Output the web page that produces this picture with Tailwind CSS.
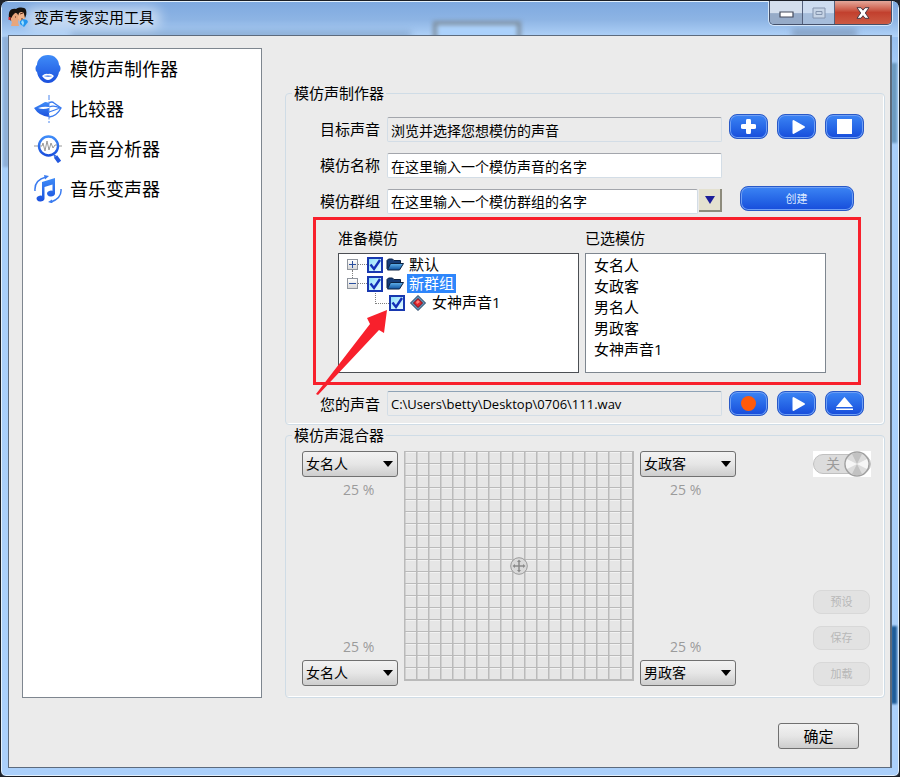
<!DOCTYPE html>
<html lang="zh-CN">
<head>
  <meta charset="UTF-8" />
  <meta name="viewport" content="width=device-width, initial-scale=1.0"/>
  <title>变声专家实用工具</title>
  <script src="https://cdn.jsdelivr.net/npm/@tailwindcss/browser@4"></script>
</head>
<body class="bg-[#20242c] font-['Open_Sans','Noto_Sans_CJK_SC',sans-serif] text-[15px] leading-5 text-black">

  <!-- Shared gradients and symbols -->
  <svg class="absolute size-0" aria-hidden="true">
    <defs>
      <linearGradient id="blue" x1="0" y1="0" x2="0" y2="1">
        <stop offset="0" stop-color="#3f8cf8"/>
        <stop offset="1" stop-color="#1b50dd"/>
      </linearGradient>
      <linearGradient id="folder" x1="0" y1="0" x2="0" y2="1">
        <stop offset="0" stop-color="#63b4ee"/>
        <stop offset="1" stop-color="#0d4f9c"/>
      </linearGradient>
      <symbol id="i-folder" viewBox="0 0 18 13">
        <path d="M1 11V2.5L2.5 1h4L8 2.500h6.500V5" fill="#173d78" stroke="#0c2344"/>
        <path d="M1.500 12 4.500 5.500h13L13.500 12z" fill="url(#folder)" stroke="#0c2344"/>
      </symbol>
      <symbol id="i-check" viewBox="0 0 16 16">
        <path d="M3.500 7.500 7 12l6-9" fill="none" stroke="#1430b8" stroke-width="2.400"/>
      </symbol>
      <symbol id="i-play" viewBox="0 0 15 16">
        <path d="M2.500 2v12L13 8z" fill="#fff" stroke="#fff" stroke-width="2" stroke-linejoin="round"/>
      </symbol>
      <symbol id="i-down" viewBox="0 0 10 6">
        <path d="M0 0h10L5 6z"/>
      </symbol>
    </defs>
  </svg>

  <!-- Window -->
  <div class="relative flex min-h-screen flex-col overflow-hidden rounded-t-lg rounded-b-md border border-[#1a1e26] bg-linear-to-b from-[#8ab2e4] via-[#a8cffa] via-10% to-[#abd0fb] px-[7px] pb-2 shadow-[inset_0_0_0_1px_#e4f1fc]">

    <!-- Shapes seen through the glass frame -->
    <div class="pointer-events-none absolute inset-x-px top-px h-[35px] bg-linear-to-b from-[#7ea9e0] via-[#8db4e4] to-[#b0d2f8]" aria-hidden="true"></div>
    <div class="pointer-events-none absolute top-5 left-[432px] h-6 w-[88px] border-4 border-[#7e8fa0] bg-[#abd1fb] blur-[2px]" aria-hidden="true"></div>
    <div class="pointer-events-none absolute top-[30px] left-[70px] h-2 w-[340px] bg-[#6987b0]/45 blur-[3px]" aria-hidden="true"></div>
    <div class="pointer-events-none absolute top-7 right-[42px] h-2 w-[65px] bg-[#6c83a4]/60 blur-[3px]" aria-hidden="true"></div>
    <div class="pointer-events-none absolute top-1.5 left-6 h-[22px] w-[136px] rounded-full bg-white/50 blur-[6px]" aria-hidden="true"></div>
    <div class="pointer-events-none absolute top-[62px] right-0.5 h-20 w-1.5 bg-[#6b9ac0] blur-[1px]" aria-hidden="true"></div>
    <div class="pointer-events-none absolute right-0.5 bottom-[72px] h-[78px] w-1.5 bg-[#1f5d99] blur-[1px]" aria-hidden="true"></div>
    <div class="pointer-events-none absolute top-9 left-0.5 h-[130px] w-1.5 bg-[#8fb0d8] blur-[1px]" aria-hidden="true"></div>

    <!-- Title bar -->
    <header class="relative flex h-[34px] shrink-0 items-start justify-between">
      <div class="flex items-center gap-1.5 pt-1.5">
        <svg class="size-5" viewBox="0 0 20 20" aria-hidden="true">
          <path d="M1 11C0 4 3 1 8 2c3-2 9-2 10 1 1 3 0 6-1 8L3 14z" fill="#17130f"/>
          <path d="M4 8c1-3 5-3 6 0l1 3-1 4 1 4H3l1-4C2 13 3 10 4 8z" fill="#e8a67c"/>
          <path d="M11 6c2-2 5-1 5 1l1 4-2 3-3 1-2-3 0-3z" fill="#f1b58c"/>
          <path d="M2 6 8 5l-3 3-3 5z" fill="#17130f"/>
          <path d="M12 7l3-1M7 10l1 0M13 12h2" stroke="#5a2a18"/>
          <path d="M1.500 10v3" stroke="#d32d2d" stroke-width="2"/>
          <path d="m12 14 3-2 4 1 1 2-4 5-4-3z" fill="#2295ee"/>
          <path d="m13 15 2-2 1 3-1 3z" fill="#9ce0ff"/>
        </svg>
        <h1>变声专家实用工具</h1>
      </div>
      <div class="flex h-6 overflow-hidden rounded-b-[5px] border border-t-0 border-[#44506a] shadow-[0_0_0_1px_#d5e6f8]">
        <button type="button" aria-label="最小化" class="grid w-[33px] place-items-center border-r border-[#53607c] bg-linear-to-b from-[#d3deed] from-50% to-[#96abc8] to-55%">
          <svg class="mt-1 h-[7px] w-[15px]" viewBox="0 0 15 7"><path d="M1 1h13v5H1z" fill="#fff" stroke="#444a5c" stroke-width="1.200"/></svg>
        </button>
        <button type="button" aria-label="最大化" disabled class="grid w-8 place-items-center border-r border-[#53607c] bg-linear-to-b from-[#cddcf0] from-50% to-[#a6bddb] to-55%">
          <svg class="h-3 w-[14px]" viewBox="0 0 14 12"><path d="M1 1h12v10H1z" fill="#c6d4e6" stroke="#8494ae"/><path d="M4 4.500h6v3H4z" fill="none" stroke="#8494ae"/></svg>
        </button>
        <button type="button" aria-label="关闭" class="grid w-[56px] place-items-center bg-linear-to-b from-[#e3a79a] via-[#c2402e] via-50% to-[#cc5a43]">
          <svg class="h-3 w-[14px]" viewBox="0 0 14 12"><path d="M1 .700h4l2 2.500L9 .700h4L9.300 6l3.700 5.300H9L7 8.700l-2 2.600H1L4.700 6z" fill="#fff" stroke="#4b3a44"/></svg>
        </button>
      </div>
    </header>

    <!-- Client area -->
    <main class="relative flex flex-1 flex-col border border-r-2 border-[#5d6b7d] bg-[#ebebeb] pt-3 pr-[5px] pl-[13px]">
      <div class="flex flex-1 gap-[23px]">

        <!-- Tool list -->
        <nav class="w-60 shrink-0 border border-[#7e868f] bg-white text-lg">
          <a href="#" class="flex h-10 items-center gap-2 pl-[11px]">
            <svg class="size-7" viewBox="0 0 28 28">
              <path d="M14 0c7 0 11 5 11 10 2 1 2 6 0 7-1 6-5 11-11 11S4 23 3 17c-2-1-2-6 0-7C3 5 7 0 14 0z" fill="url(#blue)"/>
              <path d="M8 21q3-3 6-2 3-1 6 2-3 4-6 4t-6-4z" fill="#fff"/>
              <path d="M9.500 21q4-1 9 0-4 1.500-9 0z" fill="#2b68e6"/>
            </svg>
            模仿声制作器
          </a>
          <a href="#" class="flex h-10 items-center gap-2 pl-[11px]">
            <svg class="size-7" viewBox="0 0 28 28">
              <path d="M0 13Q6 10 11 7q2 0 4 1v14Q5 21 0 13z" fill="url(#blue)"/>
              <path d="M4 13q6-2 11-1v1Q9 15 4 13z" fill="#fff"/>
              <path d="M15 8q3-2 5 0l7 5q-4 8-12 9" fill="none" stroke="#3b7cf0" stroke-width="1.300"/>
              <path d="M15 12q5-2 11 1-5 2-11 4" fill="none" stroke="#3b7cf0" stroke-width="1.300"/>
              <path d="M15 0v28" stroke="#4b86f0" stroke-dasharray="5 1.500"/>
            </svg>
            比较器
          </a>
          <a href="#" class="flex h-10 items-center gap-2 pl-[11px]">
            <svg class="size-7" viewBox="0 0 28 28">
              <path d="M0 11h5M24 11h4" stroke="#999"/>
              <circle cx="14.500" cy="11" r="9.500" fill="#fff" stroke="url(#blue)" stroke-width="2.400"/>
              <path d="M6 11h2l1-3 2 8 2-10 2 9 2-7 2 5 2-3h2" fill="none" stroke="#999"/>
              <path d="m20 20 1.500 1.500" stroke="#2b68e6" stroke-width="2"/>
              <path d="m21.500 21.500 4 5.500" stroke="#2358df" stroke-width="4"/>
            </svg>
            声音分析器
          </a>
          <a href="#" class="flex h-10 items-center gap-2 pl-[11px]">
            <svg class="size-7" viewBox="0 0 28 28">
              <path d="M8 7 21 3v15.500a4 3 0 1 1-2.500-2.700V9.500L10.500 12v11.500a4 3 0 1 1-2.500-2.700z" fill="url(#blue)"/>
              <path d="M1 16Q0 5 12 2M27 14q1 9-10 13" fill="none" stroke="#3b7cf0" stroke-width="1.500"/>
              <path d="m10 0 5 1-4 3.500zM18 24.500 14 27l4.500 1.500z" fill="#3b7cf0"/>
            </svg>
            音乐变声器
          </a>
        </nav>

        <!-- Right column -->
        <div class="flex min-w-0 flex-1 flex-col pt-[35px]">

          <!-- Voice maker -->
          <fieldset class="relative min-w-0 rounded border border-[#cfdce6] pb-2 shadow-[inset_-1px_-1px_0_#fff]">
            <legend class="ml-1.5 px-0.5">模仿声制作器</legend>

            <div class="grid grid-cols-[94px_minmax(0,1fr)_135px] gap-x-[7px] gap-y-2 pt-[11px] pr-5">
              <label for="target" class="self-end pb-[3px] text-right">目标声音</label>
              <input id="target" type="text" readonly value="浏览并选择您想模仿的声音" class="mt-[3px] h-[25px] w-full min-w-0 rounded-xs border border-[#d3dde6] border-t-[#a3a6ac] bg-[#ebebeb] px-[3px] text-sm" />
              <div class="flex h-[25px] gap-[9px]">
                <button type="button" aria-label="添加" class="grid w-[39px] place-items-center rounded-lg border border-[#2859c8] bg-linear-to-b from-[#3c84f4] to-[#184cdb] shadow-[inset_0_0_0_1px_#6f9ff4]">
                  <svg class="size-[15px]" viewBox="0 0 15 15"><path d="M7.500 2v11M2 7.500h11" stroke="#fff" stroke-width="5" stroke-linecap="round"/></svg>
                </button>
                <button type="button" aria-label="播放目标声音" class="grid w-[39px] place-items-center rounded-lg border border-[#2859c8] bg-linear-to-b from-[#3c84f4] to-[#184cdb] pl-1 shadow-[inset_0_0_0_1px_#6f9ff4]">
                  <svg class="h-4 w-[15px]"><use href="#i-play"/></svg>
                </button>
                <button type="button" aria-label="停止" class="grid w-[39px] place-items-center rounded-lg border border-[#2859c8] bg-linear-to-b from-[#3c84f4] to-[#184cdb] shadow-[inset_0_0_0_1px_#6f9ff4]">
                  <span class="size-[15px] bg-white"></span>
                </button>
              </div>

              <label for="name" class="self-end pb-[3px] text-right">模仿名称</label>
              <input id="name" type="text" value="在这里输入一个模仿声音的名字" class="mt-[3px] h-[25px] w-full min-w-0 rounded-xs border border-[#d3dde6] border-t-[#a3a6ac] bg-white px-[3px] text-sm" />
              <div></div>

              <label for="group" class="self-end pb-[3px] text-right">模仿群组</label>
              <div class="mt-[3px] flex h-[25px] gap-px">
                <input id="group" type="text" value="在这里输入一个模仿群组的名字" class="w-full min-w-0 rounded-xs border border-[#d3dde6] border-t-[#a3a6ac] bg-white px-[3px] text-sm" />
                <button type="button" aria-label="选择群组" class="mb-0.5 grid w-[23px] shrink-0 place-items-center border-r-2 border-b-2 border-[#8d8b7c] bg-[#e4e1d0]">
                  <svg class="h-2 w-[10px] fill-[#1d1f9a]" viewBox="0 0 10 8"><path d="M0 0h10L5 8z"/></svg>
                </button>
              </div>
              <div class="flex items-start justify-center">
                <button type="button" class="h-[25px] w-[114px] rounded-lg border border-[#2859c8] bg-linear-to-b from-[#3c84f4] to-[#184cdb] text-[11px] leading-4 text-[#dbe8ff] shadow-[inset_0_0_0_1px_#6f9ff4]">创建</button>
              </div>
            </div>

            <!-- Highlighted lists -->
            <div class="relative mt-[3px] mr-[23px] mb-1.5 ml-[27px] flex h-[168px] gap-1.5 border-[3px] border-[#f8202c] pt-2 pr-8 pb-2 pl-[22px]">
              <section class="flex min-w-0 flex-1 flex-col">
                <h2>准备模仿</h2>
                <ul class="mt-[5px] h-[120px] border border-[#4c4f54] bg-white pt-px pl-2 leading-[19px]">
                  <li class="flex h-[19px] items-center">
                    <button type="button" aria-label="展开默认" class="grid size-[11px] place-items-center border border-[#8f959e] bg-linear-to-b from-white to-[#d8d8d8]">
                      <svg class="size-[7px]" viewBox="0 0 7 7"><path d="M0 3.500h7M3.500 0v7" stroke="#2a4f9e"/></svg>
                    </button>
                    <span class="w-[9px] border-t border-dotted border-[#808080]"></span>
                    <span class="grid size-4">
                      <input type="checkbox" checked aria-label="默认" class="col-start-1 row-start-1 size-4 appearance-none border-2 border-[#1838b0] bg-linear-to-br from-[#8fe0fb] to-[#e6faff]" />
                      <svg class="pointer-events-none col-start-1 row-start-1 size-4"><use href="#i-check"/></svg>
                    </span>
                    <svg class="ml-[3px] h-[13px] w-[18px]"><use href="#i-folder"/></svg>
                    <span class="ml-[3px] px-0.5">默认</span>
                  </li>
                  <li class="relative flex h-[19px] items-center">
                    <span class="absolute -top-1 left-[5px] h-2 border-l border-dotted border-[#808080]"></span>
                    <button type="button" aria-label="折叠新群组" class="grid size-[11px] place-items-center border border-[#8f959e] bg-linear-to-b from-white to-[#d8d8d8]">
                      <svg class="size-[7px]" viewBox="0 0 7 7"><path d="M0 3.500h7" stroke="#2a4f9e"/></svg>
                    </button>
                    <span class="w-[9px] border-t border-dotted border-[#808080]"></span>
                    <span class="grid size-4">
                      <input type="checkbox" checked aria-label="新群组" class="col-start-1 row-start-1 size-4 appearance-none border-2 border-[#1838b0] bg-linear-to-br from-[#8fe0fb] to-[#e6faff]" />
                      <svg class="pointer-events-none col-start-1 row-start-1 size-4"><use href="#i-check"/></svg>
                    </span>
                    <svg class="ml-[3px] h-[13px] w-[18px]"><use href="#i-folder"/></svg>
                    <span class="ml-[3px] bg-[#2e86fb] px-0.5 text-white">新群组</span>
                  </li>
                  <li class="flex h-[19px] items-center pl-7">
                    <span class="h-[11px] w-[14px] self-start border-b border-l border-dotted border-[#808080]"></span>
                    <span class="grid size-4">
                      <input type="checkbox" checked aria-label="女神声音1" class="col-start-1 row-start-1 size-4 appearance-none border-2 border-[#1838b0] bg-linear-to-br from-[#8fe0fb] to-[#e6faff]" />
                      <svg class="pointer-events-none col-start-1 row-start-1 size-4"><use href="#i-check"/></svg>
                    </span>
                    <svg class="ml-[5px] size-4" viewBox="0 0 16 16">
                      <path d="m8 .500 7.500 7.500L8 15.500.500 8z" fill="#5f93b8" stroke="#1c3a5c"/>
                      <path d="m8 3.500 4.500 4.500L8 12.500 3.500 8z" fill="#e0242c" stroke="#7c1018"/>
                      <path d="m8 5 2 2-3 2-1-2z" fill="#ff7d76"/>
                    </svg>
                    <span class="ml-1 px-0.5">女神声音1</span>
                  </li>
                </ul>
              </section>
              <section class="flex min-w-0 flex-1 flex-col">
                <h2>已选模仿</h2>
                <ul class="mt-[5px] h-[120px] border border-[#7e868f] bg-white pt-px pl-2 leading-[21px]">
                  <li>女名人</li>
                  <li>女政客</li>
                  <li>男名人</li>
                  <li>男政客</li>
                  <li>女神声音1</li>
                </ul>
              </section>
              <svg class="pointer-events-none absolute top-[89px] left-0 h-[88px] w-[72px]" viewBox="0 0 72 88" aria-hidden="true">
                <path d="M0 85 54 15 51 9 71 1 68 24 63 21 2 86z" fill="#f8202c"/>
              </svg>
            </div>

            <div class="grid grid-cols-[94px_minmax(0,1fr)_135px] gap-x-[7px] pr-5">
              <label for="voice" class="self-center text-right">您的声音</label>
              <input id="voice" type="text" readonly value="C:\Users\betty\Desktop\0706\111.wav" class="h-[25px] w-full min-w-0 rounded-xs border border-[#d3dde6] border-t-[#8fa3b6] bg-[#ebebeb] px-[3px] text-[13px]" />
              <div class="flex h-[25px] gap-[9px]">
                <button type="button" aria-label="录音" class="grid w-[39px] place-items-center rounded-lg border border-[#2859c8] bg-linear-to-b from-[#3c84f4] to-[#184cdb] shadow-[inset_0_0_0_1px_#6f9ff4]">
                  <span class="size-[15px] rounded-full bg-[#ff5a0a]"></span>
                </button>
                <button type="button" aria-label="播放您的声音" class="grid w-[39px] place-items-center rounded-lg border border-[#2859c8] bg-linear-to-b from-[#3c84f4] to-[#184cdb] pl-1 shadow-[inset_0_0_0_1px_#6f9ff4]">
                  <svg class="h-4 w-[15px]"><use href="#i-play"/></svg>
                </button>
                <button type="button" aria-label="打开" class="grid w-[39px] place-items-center rounded-lg border border-[#2859c8] bg-linear-to-b from-[#3c84f4] to-[#184cdb] shadow-[inset_0_0_0_1px_#6f9ff4]">
                  <svg class="h-[14px] w-[17px]" viewBox="0 0 17 14"><path d="M8.500 0 17 10H0zM0 11.500h17V13H0z" fill="#fff"/></svg>
                </button>
              </div>
            </div>
          </fieldset>

          <!-- Voice mixer -->
          <fieldset class="min-w-0 rounded border border-[#cfdce6] shadow-[inset_-1px_-1px_0_#fff]">
            <legend class="ml-1.5 px-0.5">模仿声混合器</legend>

            <div class="flex gap-1.5 pt-1.5 pr-[13px] pb-[11px] pl-4">
              <div class="flex w-24 flex-col justify-between text-sm text-[#9b9b9b]">
                <div class="flex flex-col gap-[3px]">
                  <div class="relative">
                    <select aria-label="左上" class="h-[26px] w-full appearance-none rounded-[3px] border border-[#707070] bg-linear-to-b from-[#f2f2f2] via-[#e6e6e6] to-[#cdcdcd] pl-[3px] text-sm text-black">
                      <option>女名人</option>
                    </select>
                    <svg class="pointer-events-none absolute top-[10px] right-[5px] h-[6px] w-[10px]"><use href="#i-down"/></svg>
                  </div>
                  <p class="pl-[41px]">25 %</p>
                </div>
                <div class="flex flex-col gap-[3px]">
                  <p class="pl-[41px]">25 %</p>
                  <div class="relative">
                    <select aria-label="左下" class="h-[26px] w-full appearance-none rounded-[3px] border border-[#707070] bg-linear-to-b from-[#f2f2f2] via-[#e6e6e6] to-[#cdcdcd] pl-[3px] text-sm text-black">
                      <option>女名人</option>
                    </select>
                    <svg class="pointer-events-none absolute top-[10px] right-[5px] h-[6px] w-[10px]"><use href="#i-down"/></svg>
                  </div>
                </div>
              </div>

              <!-- Mixing pad -->
              <div class="grid size-[230px] shrink-0 place-items-center border-r border-b border-[#bababa] bg-[#e6e6e6] bg-[linear-gradient(to_right,#bababa_1px,transparent_1px),linear-gradient(to_bottom,#bababa_1px,transparent_1px),linear-gradient(to_right,#d0d0d0_2px,transparent_2px),linear-gradient(to_bottom,#f2f2f2_2px,transparent_2px)] bg-size-[12px_12px]">
                <svg class="size-[18px]" viewBox="0 0 18 18">
                  <circle cx="9" cy="9" r="8.300" fill="#d9d9d9" stroke="#9a9a9a"/>
                  <path d="M9 4v10M4 9h10" stroke="#8a8a8a" stroke-width="1.500"/>
                  <path d="m9 2.500 2 2.500H7zM9 15.500 7 13h4zM2.500 9 5 7v4zM15.500 9 13 11V7z" fill="#8a8a8a"/>
                </svg>
              </div>

              <div class="flex w-24 flex-col justify-between text-sm text-[#9b9b9b]">
                <div class="flex flex-col gap-[3px]">
                  <div class="relative">
                    <select aria-label="右上" class="h-[26px] w-full appearance-none rounded-[3px] border border-[#707070] bg-linear-to-b from-[#f2f2f2] via-[#e6e6e6] to-[#cdcdcd] pl-[3px] text-sm text-black">
                      <option>女政客</option>
                    </select>
                    <svg class="pointer-events-none absolute top-[10px] right-[5px] h-[6px] w-[10px]"><use href="#i-down"/></svg>
                  </div>
                  <p class="pl-[30px]">25 %</p>
                </div>
                <div class="flex flex-col gap-[3px]">
                  <p class="pl-[30px]">25 %</p>
                  <div class="relative">
                    <select aria-label="右下" class="h-[26px] w-full appearance-none rounded-[3px] border border-[#707070] bg-linear-to-b from-[#f2f2f2] via-[#e6e6e6] to-[#cdcdcd] pl-[3px] text-sm text-black">
                      <option>男政客</option>
                    </select>
                    <svg class="pointer-events-none absolute top-[10px] right-[5px] h-[6px] w-[10px]"><use href="#i-down"/></svg>
                  </div>
                </div>
              </div>

              <div class="ml-auto flex h-[235px] flex-col gap-3">
                <button type="button" role="switch" aria-checked="false" disabled class="mb-auto flex h-[26px] w-[58px] items-center bg-white">
                  <span class="flex h-5 w-full items-center justify-between rounded-full border border-[#c0c0c0] bg-[#dcdcdc] pl-3 text-sm text-[#9b9b9b]">关
                    <svg class="size-[26px] shrink-0" viewBox="0 0 26 26">
                      <circle cx="13" cy="13" r="12" fill="#dcdcdc" stroke="#a0a0a0" stroke-width="1.500"/>
                      <path d="M13 13 8 3q5-2.500 10 0zM13 13l5 10q-5 2.500-10 0z" fill="#c2c2c2"/>
                      <path d="M13 13 3 8q-2.500 5 0 10zM13 13l10-5q2.500 5 0 10z" fill="#f6f6f6"/>
                    </svg>
                  </span>
                </button>
                <button type="button" disabled class="h-6 w-[57px] rounded-lg border border-[#d8d8d8] bg-[#e2e2e2] text-[11px] leading-4 text-[#b8b8b8]">预设</button>
                <button type="button" disabled class="h-6 w-[57px] rounded-lg border border-[#d8d8d8] bg-[#e2e2e2] text-[11px] leading-4 text-[#b8b8b8]">保存</button>
                <button type="button" disabled class="h-6 w-[57px] rounded-lg border border-[#d8d8d8] bg-[#e2e2e2] text-[11px] leading-4 text-[#b8b8b8]">加载</button>
              </div>
            </div>
          </fieldset>
        </div>
      </div>

      <div class="flex justify-end pt-[25px] pr-[26px] pb-[18px]">
        <button type="button" class="h-[26px] w-[81px] rounded-[3px] border border-[#707070] bg-linear-to-b from-[#f2f2f2] via-[#e6e6e6] to-[#cdcdcd]">确定</button>
      </div>
    </main>
  </div>
</body>
</html>
